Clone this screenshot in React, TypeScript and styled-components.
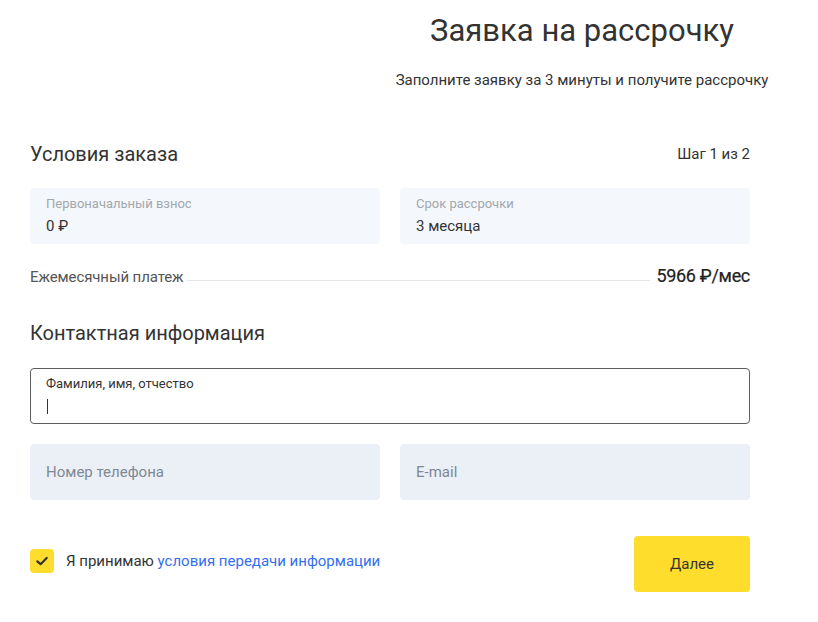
import React from "react";
import styled, { createGlobalStyle } from "styled-components";

const Global = createGlobalStyle`
  * { box-sizing: border-box; }
  body { margin: 0; background: #fff; font-family: Roboto, "Noto Sans", Arial, sans-serif; color: #333; }
`;

const Page = styled.div`
  width: 818px;
  padding: 11px 0 0 30px;
`;

const Header = styled.header`
  width: 500px;
  margin-left: 302px;
  display: flex;
  flex-direction: column;
  align-items: center;
`;

const Title = styled.h1`
  margin: 0;
  font-weight: 400;
  font-size: 31px;
  line-height: 40px;
  color: #333;
`;

const Subtitle = styled.p`
  margin: 20px 0 0;
  font-size: 15px;
  line-height: 18px;
  color: #333;
`;

const Form = styled.form`
  width: 720px;
  display: flex;
  flex-direction: column;
`;

const SectionHead = styled.div<{ $top: number }>`
  display: flex;
  justify-content: space-between;
  align-items: center;
  margin-top: ${(p) => p.$top}px;
  height: 28px;
`;

const SectionTitle = styled.h2`
  margin: 0;
  font-size: 20px;
  font-weight: 400;
  color: #333;
`;

const Step = styled.span`
  font-size: 15px;
  color: #333;
`;

const Grid = styled.div<{ $top: number }>`
  display: grid;
  grid-template-columns: 1fr 1fr;
  gap: 20px;
  margin-top: ${(p) => p.$top}px;
`;

const Field = styled.div<{ $bg: string }>`
  height: 56px;
  border-radius: 4px;
  background: ${(p) => p.$bg};
  padding: 8px 16px 0;
  display: flex;
  flex-direction: column;
`;

const FieldLabel = styled.span<{ $color: string }>`
  font-size: 13px;
  line-height: 16px;
  color: ${(p) => p.$color};
`;

const FieldValue = styled.span`
  font-size: 15px;
  line-height: 18px;
  margin-top: 5px;
  color: #333;
`;

const Placeholder = styled.span`
  font-size: 15px;
  line-height: 56px;
  margin-top: -8px;
  color: #7f8893;
`;

const MonthlyRow = styled.div`
  display: flex;
  align-items: flex-end;
  margin-top: 20px;
  height: 22px;
`;

const MonthlyLabel = styled.span`
  font-size: 15px;
  line-height: 18px;
  color: #555;
  letter-spacing: -0.1px;
`;

const Leader = styled.span`
  flex: 1;
  border-bottom: 1px solid #e3e5e8;
  margin: 0 6px 5px 4px;
`;

const MonthlyValue = styled.span`
  font-size: 18px;
  line-height: 20px;
  font-weight: 400;
  color: #222;
  letter-spacing: -0.3px;
  -webkit-text-stroke: 0.2px #222;
`;

const InputBox = styled.div`
  margin-top: 21px;
  height: 56px;
  border: 1px solid #5d5d5d;
  border-radius: 4px;
  padding: 7px 15px 0;
  display: flex;
  flex-direction: column;
`;

const Caret = styled.span`
  width: 1px;
  height: 15px;
  background: #333;
  margin-top: 7px;
  margin-left: 1px;
`;

const Footer = styled.div`
  display: flex;
  justify-content: space-between;
  align-items: center;
  margin-top: 36px;
`;

const Agree = styled.label`
  display: flex;
  align-items: center;
  gap: 12px;
  font-size: 15px;
  color: #333;
  margin-top: -7px;
`;

const Check = styled.span`
  width: 24px;
  height: 24px;
  border-radius: 4px;
  background: #ffdd2d;
  display: flex;
  align-items: center;
  justify-content: center;
`;

const Link = styled.a`
  color: #336fee;
  text-decoration: none;
`;

const Button = styled.button`
  width: 116px;
  height: 56px;
  border: none;
  border-radius: 4px;
  background: #ffdd2d;
  font-family: inherit;
  font-size: 15px;
  color: #333;
`;

export default function App() {
  return (
    <>
      <Global />
      <Page>
        <Header>
          <Title>Заявка на рассрочку</Title>
          <Subtitle>Заполните заявку за 3 минуты и получите рассрочку</Subtitle>
        </Header>
        <Form onSubmit={(e) => e.preventDefault()}>
          <SectionHead $top={51}>
            <SectionTitle>Условия заказа</SectionTitle>
            <Step>Шаг 1 из 2</Step>
          </SectionHead>
          <Grid $top={20}>
            <Field $bg="#f4f7fb">
              <FieldLabel $color="#a2a7ae">Первоначальный взнос</FieldLabel>
              <FieldValue>0 ₽</FieldValue>
            </Field>
            <Field $bg="#f4f7fb">
              <FieldLabel $color="#a2a7ae">Срок рассрочки</FieldLabel>
              <FieldValue>3 месяца</FieldValue>
            </Field>
          </Grid>
          <MonthlyRow>
            <MonthlyLabel>Ежемесячный платеж</MonthlyLabel>
            <Leader />
            <MonthlyValue>5966 ₽/мес</MonthlyValue>
          </MonthlyRow>
          <SectionHead $top={33}>
            <SectionTitle>Контактная информация</SectionTitle>
          </SectionHead>
          <InputBox>
            <FieldLabel $color="#333">Фамилия, имя, отчество</FieldLabel>
            <Caret />
          </InputBox>
          <Grid $top={20}>
            <Field $bg="#ebf0f7">
              <Placeholder>Номер телефона</Placeholder>
            </Field>
            <Field $bg="#ebf0f7">
              <Placeholder>E-mail</Placeholder>
            </Field>
          </Grid>
          <Footer>
            <Agree>
              <Check>
                <svg width="14" height="14" viewBox="0 0 14 14" fill="none">
                  <path d="M2.3 7.3 L5.6 10.2 L11.7 3.9" stroke="#333" strokeWidth="2.2" strokeLinecap="round" strokeLinejoin="round" />
                </svg>
              </Check>
              <span>
                Я принимаю <Link href="#">условия передачи информации</Link>
              </span>
            </Agree>
            <Button type="submit">Далее</Button>
          </Footer>
        </Form>
      </Page>
    </>
  );
}
